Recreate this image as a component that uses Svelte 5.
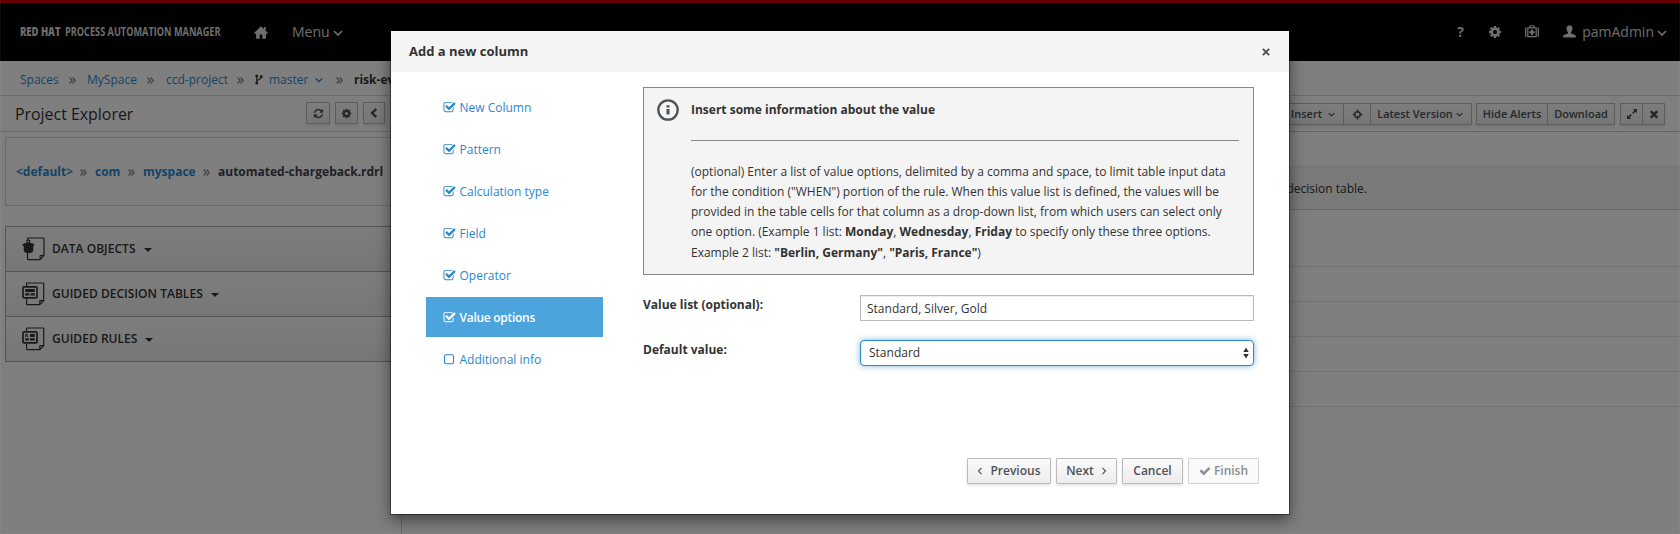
<script>
  const steps = [
    { label: 'New Column', done: true },
    { label: 'Pattern', done: true },
    { label: 'Calculation type', done: true },
    { label: 'Field', done: true },
    { label: 'Operator', done: true },
    { label: 'Value options', done: true, active: true },
    { label: 'Additional info', done: false }
  ];
  const groups = [
    { label: 'DATA OBJECTS', kind: 'data' },
    { label: 'GUIDED DECISION TABLES', kind: 'table' },
    { label: 'GUIDED RULES', kind: 'rule' }
  ];
  const rows = [1, 2, 3, 4, 5];
  let valueList = $state('Standard, Silver, Gold');

  const COG = 'M1152 896q0-106-75-181t-181-75-181 75-75 181 75 181 181 75 181-75 75-181zm512-109v222q0 12-8 23t-20 13l-185 28q-19 54-39 91 35 50 107 138 10 12 10 25t-9 23q-27 37-99 108t-94 71q-12 0-26-9l-138-108q-44 23-91 38-16 136-29 186-7 28-36 28h-222q-14 0-24.5-8.5t-11.5-21.5l-28-184q-49-16-90-37l-141 107q-10 9-25 9-14 0-25-11-126-114-165-168-7-10-7-23 0-12 8-23 15-21 51-66.5t54-70.5q-27-50-41-99l-183-27q-13-2-21-12.5t-8-23.5v-222q0-12 8-23t19-13l186-28q14-46 39-92-40-57-107-138-10-12-10-24 0-10 9-23 26-36 98.5-107.5t94.5-71.5q13 0 26 10l138 107q44-23 91-38 16-136 29-186 7-28 36-28h222q14 0 24.5 8.5t11.5 21.5l28 184q49 16 90 37l142-107q9-9 24-9 13 0 25 10 129 119 165 170 7 8 7 22 0 12-8 23-15 21-51 66.5t-54 70.5q26 50 41 98l183 28q13 2 21 12.5t8 23.5z';
  const CLOSE = 'M1490 1322q0 40-28 68l-136 136q-28 28-68 28t-68-28l-294-294-294 294q-28 28-68 28t-68-28l-136-136q-28-28-28-68t28-68l294-294-294-294q-28-28-28-68t28-68l136-136q28-28 68-28t68 28l294 294 294-294q28-28 68-28t68 28l136 136q28 28 28 68t-28 68l-294 294 294 294q28 28 28 68z';
  const CHECK = 'M1671 566q0 40-28 68l-724 724-136 136q-28 28-68 28t-68-28l-136-136-362-362q-28-28-28-68t28-68l136-136q28-28 68-28t68 28l294 295 656-657q28-28 68-28t68 28l136 136q28 28 28 68z';
  const CHECK_SQUARE = 'M1472 930v318q0 119-84.5 203.5t-203.5 84.5h-832q-119 0-203.5-84.5t-84.5-203.5v-832q0-119 84.5-203.5t203.5-84.5h832q63 0 117 25 15 7 18 23 3 17-9 29l-49 49q-10 10-23 10-3 0-9-2-23-6-45-6h-832q-66 0-113 47t-47 113v832q0 66 47 113t113 47h832q66 0 113-47t47-113v-254q0-13 9-22l64-64q10-10 23-10 6 0 12 3 20 8 20 29zm231-489l-814 814q-24 24-57 24t-57-24l-430-430q-24-24-24-57t24-57l110-110q24-24 57-24t57 24l263 263 647-647q24-24 57-24t57 24l110 110q24 24 24 57t-24 57z';
  const REFRESH = 'M1639 1056q0 5-1 7-64 268-268 434.5t-478 166.5q-146 0-282.5-55t-243.5-157l-129 129q-19 19-45 19t-45-19-19-45v-448q0-26 19-45t45-19h448q26 0 45 19t19 45-19 45l-137 137q71 66 161 102t187 36q134 0 250-65t186-179q11-17 53-117 8-23 30-23h192q13 0 22.5 9.5t9.5 22.5zm25-800v448q0 26-19 45t-45 19h-448q-26 0-45-19t-19-45 19-45l138-138q-148-137-349-137-134 0-250 65t-186 179q-11 17-53 117-8 23-30 23h-199q-13 0-22.5-9.5t-9.5-22.5v-7q65-268 270-434.5t480-166.5q146 0 284 55.5t245 156.5l130-129q19-19 45-19t45 19 19 45z';
</script>

{#snippet solid(d, size)}
  <svg width={size} height={size} viewBox="0 0 1792 1792" fill="currentColor"><path {d} /></svg>
{/snippet}
{#snippet down(size)}
  <svg class="down" width={size} height={size} viewBox="0 0 10 10" fill="none" stroke="currentColor" stroke-width="1.7"><path d="M1 3l4 4 4-4" /></svg>
{/snippet}
{#snippet sep()}
  <svg class="sep" width="7" height="7" viewBox="0 0 7 7" fill="none" stroke="currentColor" stroke-width="1.5"><path d="M.6.4l2.600 3.100L.6 6.600M3.600.4l2.600 3.100-2.600 3.100" /></svg>
{/snippet}

<div class="screen">
  <header class="masthead">
    <div class="brand">
      <svg width="41" height="16"><text class="strong" x="0" y="12.5" textLength="40.5" lengthAdjust="spacingAndGlyphs">RED HAT</text></svg>
      <svg width="156" height="16"><text x="0" y="12.5" textLength="155.5" lengthAdjust="spacingAndGlyphs">PROCESS AUTOMATION MANAGER</text></svg>
    </div>
    <svg class="home" width="14" height="13" viewBox="0 0 14 13" fill="currentColor"><path d="M7 .2L0 6.900l.7.800h1.400v5h3.600V8.600h2.600v4.100h3.600v-5h1.400l.7-.8-2.300-2.200V1H9.900v2z" /></svg>
    <span class="menu">Menu</span>{@render down(10)}
    <div class="tools">
      <span class="help">?</span>
      <span class="t-cog">{@render solid(COG, 14)}</span>
      <svg class="kit" width="14" height="13" viewBox="0 0 14 13" fill="currentColor">
        <path d="M1.300 2.200v10Q0 12.200 0 11V3.400q0-1.200 1.300-1.200zM12.700 2.200q1.300 0 1.300 1.200V11q0 1.200-1.300 1.200z" />
        <path fill-rule="evenodd" d="M2.200 2.200h2V1.200q0-1 1-1h3.600q1 0 1 1v1h2v10H2.200zM5.400 1.300v.9h3.200v-.9zM3.400 3.400V11h7.200V3.400z" />
        <path d="M6 4.600h2v1.700h1.800v1.900H8v1.700H6V8.200H4.200V6.300H6z" />
      </svg>
      <svg class="user" width="13" height="13" viewBox="0 0 13 13" fill="currentColor"><path d="M6.500.2c2 0 3 1.300 3 3.300 0 1.500-.6 2.800-1.500 3.600v1.200c.4.8 4.800 1 4.800 3v1.300H.2v-1.300c0-2 4.400-2.200 4.800-3V7.100C4.100 6.300 3.500 5 3.500 3.500c0-2 1-3.300 3-3.300z" /></svg>
      <span class="uname">pamAdmin</span>{@render down(10)}
    </div>
  </header>

  <nav class="crumbs">
    <a href="#spaces">Spaces</a>{@render sep()}
    <a href="#myspace">MySpace</a>{@render sep()}
    <a href="#project">ccd-project</a>{@render sep()}
    <svg class="branch" width="8" height="11" viewBox="0 0 9 12" fill="none" stroke="currentColor" stroke-width="1.400"><circle cx="2" cy="2" r="1" /><circle cx="2" cy="10" r="1" /><circle cx="7" cy="2.600" r="1" /><path d="M2 3v6M7 3.600C7 6.500 2 5.500 2 8.500" /></svg>
    <a href="#master">master</a><span class="link">{@render down(8)}</span>{@render sep()}
    <b>risk-ev</b>
  </nav>

  <div class="work">
    <aside>
      <div class="explorer-head">
        <h2>Project Explorer</h2>
        <button class="sq w24">{@render solid(REFRESH, 11)}</button>
        <button class="sq w23">{@render solid(COG, 11)}</button>
        <button class="sq w22"><svg width="8" height="10" viewBox="0 0 8 10" fill="none" stroke="currentColor" stroke-width="2.400"><path d="M6.300.8L2 5l4.300 4.200" /></svg></button>
      </div>
      <div class="package">
        <a href="#default">&lt;default&gt;</a>{@render sep()}
        <a href="#com">com</a>{@render sep()}
        <a href="#pkg">myspace</a>{@render sep()}
        <span>automated-chargeback.rdrl</span>
      </div>
      <div class="groups">
        {#each groups as g}
          <div class="group">
            <svg width="24" height="24" viewBox="0 0 24 24" fill="none" stroke="currentColor" stroke-width="1.200">
              {#if g.kind === 'data'}
                <path d="M5.500 4V1.600Q5.500 1 6.100 1H21.400q.6 0 .6.600v17l-4 4H6.100q-.6 0-.6-.6V16M21.900 18.600h-3.200q-.6 0-.6.600v3.200" />
                <path fill="currentColor" stroke="none" d="M1.600 6.400q4.800-1.200 9.600 0l1.200 1.900-1.200.9.100 4.300q-.3 2-2.300 2.400H4.200q-2-.4-2.500-2.400l.1-4.300L0 8.300z" />
                <circle cx="6.400" cy="4.600" r="1.500" />
              {:else}
                <path d="M4.600 4V1.600Q4.600 1 5.200 1H21q.7 0 .7.700v17l-4 4H5.200q-.6 0-.6-.6V17M21.600 18.700h-3.200q-.6 0-.6.600v3.200" />
                <rect x="1" y="4.800" width="14" height="11" rx="1" stroke-width="1.700" />
                {#if g.kind === 'table'}
                  <path fill="currentColor" stroke="none" d="M3.200 7h9.600v3H3.200zM3.200 11.200h4.200v2.300H3.200zM8.600 11.200h4.200v2.300H8.600z" />
                {:else}
                  <path fill="currentColor" stroke="none" d="M8 7h4.800v3H8zM3.200 11.200h3.700v2.300H3.200zM8 11.200h4.800v2.300H8z" />
                  <path stroke-width=".9" d="M3.700 10.200V7.300h1.500q1 .8-.1 1.500H3.800M5 8.800l1.100 1.400" />
                {/if}
              {/if}
            </svg>
            <span>{g.label}</span><i class="caret"></i>
          </div>
        {/each}
      </div>
    </aside>

    <main>
      <div class="toolbar">
        <div class="bgroup">
          <button class="b-insert">Insert {@render down(7)}</button>
          <button class="b-target"><svg width="11" height="11" viewBox="0 0 11 11" fill="none" stroke="currentColor" stroke-width="1.400"><circle cx="5.500" cy="5.500" r="2.800" /><path d="M5.500.6v2.800M5.500 7.600v2.800M.6 5.500h2.800M7.600 5.500h2.800" /></svg></button>
          <button class="b-version">Latest Version {@render down(7)}</button>
        </div>
        <div class="bgroup">
          <button class="b-alerts">Hide Alerts</button>
          <button class="b-download">Download</button>
        </div>
        <div class="bgroup last">
          <button class="b-expand"><svg width="10" height="10" viewBox="0 0 10 10" fill="currentColor"><path d="M5.800 0H10v4.200L8.500 2.700 6.300 4.900 5.100 3.700l2.200-2.200zM4.200 10H0V5.800l1.500 1.500 2.200-2.200 1.200 1.200-2.200 2.200z" /></svg></button>
          <button class="b-close">{@render solid(CLOSE, 12)}</button>
        </div>
      </div>
      <div class="tabs"></div>
      <div class="hint">decision table.</div>
      <div class="spacer"></div>
      {#each rows as r (r)}<div class="row"></div>{/each}
    </main>
  </div>

  <div class="backdrop"></div>

  <section class="modal">
    <div class="m-head">
      <h3>Add a new column</h3>
      <button class="x"><svg width="8" height="8" viewBox="0 0 8 8" fill="none" stroke="currentColor" stroke-width="2"><path d="M.9.9l6.200 6.200M7.100.9L.9 7.100" /></svg></button>
    </div>
    <div class="m-body">
      <ul class="steps">
        {#each steps as s}
          <li class:active={s.active}>
            {#if s.done}
              {@render solid(CHECK_SQUARE, 13)}
            {:else}
              <svg width="13" height="13" viewBox="0 0 13 13" fill="none" stroke="currentColor" stroke-width="1.100"><rect x="1.500" y="1.700" width="9" height="9" rx="1.500" /></svg>
            {/if}
            <span>{s.label}</span>
          </li>
        {/each}
      </ul>
      <div class="content">
        <div class="info">
          <svg width="22" height="22" viewBox="0 0 22 22"><circle cx="11" cy="11" r="9.700" fill="none" stroke="#4d5258" stroke-width="2.300" /><path fill="#4d5258" d="M9.500 6.300h3v2.300h-3zM9.500 10h3v5.500h-3z" /></svg>
          <div class="info-text">
            <h4>Insert some information about the value</h4>
            <hr />
            <p>
              (optional) Enter a list of value options, delimited by a comma and space, to limit table input data<br />
              for the condition ("WHEN") portion of the rule. When this value list is defined, the values will be<br />
              provided in the table cells for that column as a drop-down list, from which users can select only<br />
              one option. (Example 1 list: <b>Monday</b>, <b>Wednesday</b>, <b>Friday</b> to specify only these three options.<br />
              <span class="example">Example 2 list: <b>"Berlin, Germany"</b>, <b>"Paris, France"</b>)</span>
            </p>
          </div>
        </div>
        <div class="field">
          <label for="values">Value list (optional):</label>
          <input id="values" bind:value={valueList} />
        </div>
        <div class="field">
          <label for="default">Default value:</label>
          <button id="default" class="select"><span>Standard</span>
            <svg width="6" height="12" viewBox="0 0 6 12" fill="currentColor"><path d="M3 .5L5.700 5H.3zM3 11.500L.3 7h5.400z" /></svg>
          </button>
        </div>
        <div class="actions">
          <button class="a-prev"><svg width="6" height="8" viewBox="0 0 6 8" fill="none" stroke="currentColor" stroke-width="1.100"><path d="M4.500.8L1.500 4l3 3.200" /></svg><span>Previous</span></button>
          <button class="a-next"><span>Next</span><svg width="6" height="8" viewBox="0 0 6 8" fill="none" stroke="currentColor" stroke-width="1.100"><path d="M1.500.8l3 3.200-3 3.200" /></svg></button>
          <button class="a-cancel">Cancel</button>
          <button class="a-finish" disabled>{@render solid(CHECK, 12)}<span>Finish</span></button>
        </div>
      </div>
    </div>
  </section>
</div>

<style>
  :global(body) { background: #808080; }
  .screen {
    position: relative; width: 1680px; height: 534px; overflow: hidden; box-sizing: border-box;
    background: #fff; color: #333; font: 12px/20px "Open Sans", sans-serif;
  }
  .screen *, .screen :global(svg) { box-sizing: border-box; }
  .screen :global(svg) { flex: none; display: block; overflow: visible; }
  a, .link { color: #2b87cd; text-decoration: none; }
  button { font: inherit; color: inherit; margin: 0; padding: 0; border: 1px solid #bbb; background: linear-gradient(#fafafa, #ededed); display: flex; align-items: center; justify-content: center; }
  h2, h3, h4, p, ul, hr { margin: 0; padding: 0; }

  .masthead { height: 61px; border-top: 3px solid #c00; background: #020202; color: #dcdcdc; display: flex; align-items: center; padding: 0 13px 1px 20px; font-size: 14px; }
  .brand { display: flex; gap: 3.500px; width: 202px; margin-top: -1px; font-size: 12.500px; fill: #d8d8d8; font-weight: 700; }
  .strong { font-weight: 800; }
  .home { margin: 1px 24px 0 32px; }
  .menu { margin: 0 3px 0 0; }
  .masthead :global(.down) { margin-top: 2px; }
  .tools { margin-left: auto; display: flex; align-items: center; }
  .help { font-weight: 700; width: 8px; margin-right: 23px; }
  .t-cog { margin-right: 23px; }
  .kit { margin-right: 24px; }
  .user { margin-right: 6px; }
  .uname { margin-right: 3px; }

  .crumbs { height: 35px; border-bottom: 1px solid #d6d6d6; display: grid; align-items: center; padding: 3px 0 0 20px;
    grid-template-columns: 49px 18px 60px 19px 71px 18px 14px 46px 21px 18px 60px; }
  .screen :global(.sep) { color: #939393; margin-top: 1px; }
  .crumbs b, .package { font-weight: 700; }

  .work { display: flex; height: 438px; }
  aside { width: 402px; border-right: 1px solid #d0d0d0; display: flex; flex-direction: column; }
  .explorer-head { height: 36px; border-bottom: 1px solid #d0d0d0; display: flex; align-items: flex-start; padding: 6px 16px 0 15px; gap: 5px; }
  h2 { font-weight: 400; font-size: 15.900px; line-height: 24px; flex: 1; }
  .sq { height: 22px; box-shadow: 0 2px 3px rgba(3, 3, 3, .1); color: #4d5258; }
  .w24 { width: 24px; }
  .w23 { width: 23px; }
  .w22 { width: 22px; }
  .package { margin: 5px 5px 0; height: 69px; border: 1px solid #d4d4d4; display: grid; align-items: center; padding-left: 10px; color: #40444a;
    grid-template-columns: 64px 15px 33px 15px 60px 15px 170px; }
  .groups { margin: 20px 5px 0; border: 1px solid #a8a8a8; border-bottom: 0; }
  .group { height: 45px; border-bottom: 1px solid #a8a8a8; background: linear-gradient(#fcfcfc, #ededed); display: flex; align-items: center; padding: 0 0 1px 16px; font-weight: 600; letter-spacing: .03px; }
  .group span { margin-left: 6px; }
  .caret { margin: 2px 0 0 8px; border: 4px solid transparent; border-top-color: #333; border-bottom: 0; }

  main { flex: 1; display: flex; flex-direction: column; }
  .toolbar { height: 36px; border-bottom: 1px solid #c8c8c8; display: flex; justify-content: flex-end; padding: 7px 15px 0 0; font-size: 11px; color: #4d5258; font-weight: 600; }
  .bgroup { display: flex; height: 22px; margin-left: 4px; box-shadow: 0 2px 3px rgba(3, 3, 3, .1); }
  .bgroup button + button { border-left: 0; }
  .bgroup.last { margin-left: 5px; }
  .b-insert { width: 80px; justify-content: flex-end; gap: 6px; padding-right: 8px; }
  .b-target { width: 27px; }
  .b-version { width: 101px; gap: 3px; padding-right: 2px; }
  .b-alerts { width: 72px; }
  .b-download { width: 67px; }
  .b-expand { width: 23px; }
  .b-close { width: 22px; }
  .tabs { height: 34px; }
  .hint { height: 44px; background: #f5f5f5; border-top: 1px solid #e8e8e8; border-bottom: 1px solid #d0d0d0; padding: 12px 313px 0 0; text-align: right; }
  .spacer { height: 22px; }
  .row { height: 35px; border-bottom: 1px solid #e4e4e4; }

  .backdrop { position: absolute; inset: 0; background: rgba(0, 0, 0, .5); border: 1px solid rgba(255, 255, 255, .05); border-top: 0; }

  .modal { position: absolute; left: 391px; top: 31px; width: 898px; height: 483px; background: #fff; box-shadow: 0 0 0 1px rgba(0, 0, 0, .4), 0 5px 15px rgba(0, 0, 0, .55); }
  .m-head { height: 41px; background: #f4f4f4; display: flex; align-items: center; justify-content: space-between; padding: 0 19px 0 18px; }
  h3 { font-size: 13px; font-weight: 700; line-height: 20px; margin-top: -1px; }
  .x { border: 0; background: none; color: #555; }
  .m-body { display: flex; padding: 15px 30px 0 35px; }
  .steps { list-style: none; width: 177px; margin-right: 40px; }
  .steps li { height: 40px; margin-bottom: 2px; padding: 1px 0 0 17px; display: flex; align-items: center; color: #2b87cd; }
  .steps span { margin-left: 3.500px; }
  .steps .active { background: #4ba4dc; color: #fff; font-weight: 600; letter-spacing: -.28px; }
  .content { width: 616px; }
  .info { width: 611px; height: 188px; border: 1px solid #888; background: #f4f4f4; display: flex; padding: 11px 14px 0 13px; }
  .info-text { flex: 1; margin-left: 12px; }
  h4 { font-size: 12px; font-weight: 700; line-height: 20px; padding-top: 1px; }
  hr { border: 0; height: 1px; background: #888; margin: 20px 0 21px; }
  p { white-space: nowrap; }
  .example { display: inline-block; padding-top: 1px; }
  .field { width: 611px; display: flex; justify-content: space-between; }
  .field label { font-weight: 700; }
  .field input, .select { width: 394px; height: 26px; border: 1px solid #bbb; background: #fff; font: inherit; color: #333; padding: 0 6px; outline: 0; box-shadow: inset 0 1px 1px rgba(3, 3, 3, .075); }
  .info + .field { margin-top: 20px; }
  .field + .field { margin-top: 19px; }
  .select { justify-content: space-between; padding: 0 4px 0 8px; border: 1px solid #2b87cd; border-radius: 4px; box-shadow: 0 0 6px rgba(43, 135, 205, .6); }
  .actions { display: flex; justify-content: flex-end; gap: 5px; margin-top: 92px; color: #4d5258; font-weight: 600; }
  .actions button { height: 26px; padding-bottom: 1px; box-shadow: 0 2px 3px rgba(3, 3, 3, .1); border-radius: 1px; }
  .a-prev { width: 84px; }
  .a-prev span { margin-left: 7px; }
  .a-next { width: 61px; }
  .a-next span { margin-right: 7px; }
  .a-cancel { width: 61px; }
  .actions .a-finish { width: 71px; background: #fafafa; border-color: #d1d1d1; color: #8b8d8f; box-shadow: none; }
  .a-finish span { margin-left: 3px; }
</style>
